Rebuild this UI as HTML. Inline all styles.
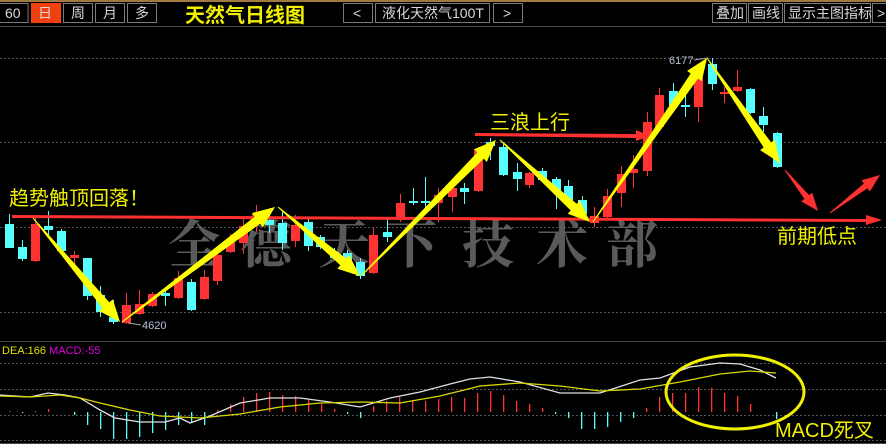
<!DOCTYPE html>
<html><head><meta charset="utf-8">
<style>
html,body{margin:0;padding:0;background:#000;width:886px;height:444px;overflow:hidden}
svg{display:block}
.b{fill:none;stroke:#7a7a7a;stroke-width:1}
.bt{font-family:"Liberation Sans","Noto Sans CJK SC",sans-serif;font-size:14px;fill:#d8d8d8}
.y{font-family:"Liberation Sans","Noto Sans CJK SC",sans-serif;fill:#f0f000}
.wm{font-family:"Noto Serif CJK SC","WenQuanYi Zen Hei",serif;font-size:52px;font-weight:bold;fill:#6a6a6a;opacity:.85}
</style></head><body>
<svg id="s" width="886" height="444" xmlns="http://www.w3.org/2000/svg">
<rect width="886" height="444" fill="#000"/>
<rect x="0" y="0" width="886" height="2" fill="#a07a40"/>
<line x1="0" y1="26.5" x2="886" y2="26.5" stroke="#4a4a4a"/>
<rect class="b" x="-1" y="3.5" width="29" height="19"/>
<text class="bt" x="5" y="18">60</text>
<rect x="31" y="3" width="30" height="20" fill="#f04010"/>
<text class="bt" x="38" y="18" fill="#f8d0c0">日</text>
<rect class="b" x="63.5" y="3.5" width="29" height="19"/><text class="bt" x="71" y="18">周</text>
<rect class="b" x="95.5" y="3.5" width="29" height="19"/><text class="bt" x="103" y="18">月</text>
<rect class="b" x="127.5" y="3.5" width="29" height="19"/><text class="bt" x="135" y="18">多</text>
<text class="y" x="185" y="22" font-size="20" font-weight="bold">天然气日线图</text>
<rect class="b" x="343.5" y="3.5" width="29" height="19"/><text class="bt" x="353" y="18">&lt;</text>
<rect class="b" x="375.5" y="3.5" width="114" height="19"/><text class="bt" x="382" y="18">液化天然气100T</text>
<rect class="b" x="493.5" y="3.5" width="29" height="19"/><text class="bt" x="503" y="18">&gt;</text>
<rect class="b" x="712.5" y="3.5" width="34" height="19"/><text class="bt" x="716" y="18">叠加</text>
<rect class="b" x="748.5" y="3.5" width="34" height="19"/><text class="bt" x="752" y="18">画线</text>
<rect class="b" x="784.5" y="3.5" width="86" height="19"/><text class="bt" x="788" y="18">显示主图指标</text>
<rect class="b" x="872.5" y="3.5" width="20" height="19"/><text class="bt" x="877" y="18">&gt;</text>
<g stroke="#555" stroke-dasharray="2,2" stroke-width="1">
<line x1="0" y1="58.5" x2="886" y2="58.5"/><line x1="0" y1="142.5" x2="886" y2="142.5"/>
<line x1="0" y1="227.5" x2="886" y2="227.5"/><line x1="0" y1="312.5" x2="886" y2="312.5"/>
<line x1="0" y1="363.5" x2="886" y2="363.5"/><line x1="0" y1="389.5" x2="886" y2="389.5"/>
<line x1="0" y1="415.5" x2="886" y2="415.5"/><line x1="0" y1="440.5" x2="886" y2="440.5"/>
</g>
<line x1="0" y1="341.5" x2="886" y2="341.5" stroke="#444"/>
<line x1="0" y1="443.5" x2="886" y2="443.5" stroke="#444"/>
<g class="wm">
<text x="168" y="263">全</text><text x="240" y="263">德</text><text x="318" y="263">天</text>
<text x="385" y="263">下</text><text x="462" y="263">技</text><text x="536" y="263">术</text><text x="606" y="263">部</text>
</g>
<g id="cand"></g>
<g id="hist"></g>
<polyline fill="none" stroke="#e0e0e0" stroke-width="1.3" points="0,395 30,397 48,393 65,395 80,398 100,410 115,418 140,422 165,422 180,418 190,423 210,416 240,403 270,398 300,398 330,402 360,407 390,398 420,392 450,384 470,379 490,377 520,382 560,393 600,393 640,380 660,378 690,367 720,363 740,364 760,370 776,378"/>
<polyline fill="none" stroke="#d8d800" stroke-width="1.3" points="0,396 30,397 60,395 80,398 100,403 130,410 160,416 200,418 240,414 280,407 320,403 360,402 400,403 440,396 480,386 520,383 560,386 600,391 640,389 680,382 720,374 750,371 776,373"/>
<polygon fill="#ff3030" points="12,215 866,219 866,215 882,220 866,225 866,222 12,218"/>
<polygon fill="#ff3030" points="475,133 636,134 636,130 650,136 636,141 636,138 475,136"/>
<g id="arr"></g>
<text x="142" y="329" font-family="Liberation Sans,sans-serif" font-size="11" fill="#b8c0d8">4620</text>
<line x1="128" y1="323" x2="141" y2="325" stroke="#aaa"/>
<text x="669" y="64" font-family="Liberation Sans,sans-serif" font-size="11" fill="#b8c0d8">6177</text>
<line x1="694" y1="60" x2="708" y2="58" stroke="#aaa"/>
<text class="y" x="9" y="205" font-size="20">趋势触顶回落！</text>
<text class="y" x="490" y="129" font-size="20">三浪上行</text>
<text class="y" x="777" y="243" font-size="20">前期低点</text>
<text class="y" x="775" y="437" font-size="20">MACD死叉</text>
<text x="2" y="354" font-family="Liberation Sans,sans-serif" font-size="11"><tspan fill="#e0e000">DEA:166 </tspan><tspan fill="#e000e0">MACD:-55</tspan></text>
<ellipse cx="735" cy="392" rx="69" ry="37" fill="none" stroke="#f0f000" stroke-width="3"/>
</svg>
<script>
var NS="http://www.w3.org/2000/svg";
function el(p,t,a){var e=document.createElementNS(NS,t);for(var k in a)e.setAttribute(k,a[k]);p.appendChild(e);return e;}
var R="#ff3333",C="#55ffff";
var cs=[[9,C,224,248,214,248],[22,C,247,259,240,261],[35,R,224,261,217,262],[48,C,226,230,211,235],[61,C,231,251,229,252],
[74,R,255,258,251,264],[87,C,258,296,258,300],[100,C,295,312,286,317],[113,C,317,322,300,324],[126,R,305,323,293,324],
[139,R,304,314,290,315],[152,R,294,306,292,307],[165,C,293,296,289,306],[178,R,278,298,271,299],[191,C,282,310,279,311],
[204,R,277,299,270,300],[217,R,255,281,250,285],[230,R,242,252,234,253],[243,R,226,243,218,254],[256,R,214,222,205,232],
[269,C,220,225,213,233],[282,C,223,243,211,250],[295,R,225,241,215,247],[308,C,222,246,219,251],[320,C,237,247,235,249],
[334,C,252,258,248,260],[347,C,253,267,250,270],[360,C,262,276,258,279],[373,R,235,273,228,274],[387,C,232,237,219,242],
[400,R,203,220,194,222],[413,C,201,203,188,205],[425,C,201,203,177,210],[438,R,195,203,188,222],[452,R,188,197,186,212],
[464,C,188,192,183,204],[478,R,149,191,147,192],[490,C,142,146,138,160],[503,C,147,175,143,176],[517,C,172,179,163,191],
[529,R,173,185,172,188],[542,C,171,180,168,181],[556,C,179,192,177,209],[568,C,186,201,180,202],[582,C,200,214,196,218],
[594,R,216,223,207,227],[607,R,196,217,189,219],[621,R,174,193,166,207],[633,R,169,173,155,188],[647,R,122,171,112,176],
[659,R,95,127,88,128],[673,C,91,107,83,110],[685,C,105,107,93,117],[698,R,68,107,65,122],[712,C,64,84,58,90],
[724,R,92,94,87,103],[737,R,87,91,70,92],[750,C,89,113,88,114],[763,C,116,125,107,132],[777,C,133,167,132,168]];
var g=document.getElementById("cand");
cs.forEach(function(c){el(g,"rect",{x:c[0],y:c[4],width:1,height:c[5]-c[4],fill:c[1]});
el(g,"rect",{x:c[0]-4,y:c[2],width:9,height:Math.max(2,c[3]-c[2]),fill:c[1]});});
var hs={9:-1,22:1,35:-1,48:-3,74:3,87:13,100:17,113:27,126:27,139:25,152:21,165:18,178:13,191:11,204:13,217:-2,230:-8,243:-15,256:-19,269:-20,282:-17,295:-16,308:-12,321:-8,334:-3,347:2,360:6,373:-6,386:-11,399:-15,412:-12,425:-11,438:-13,451:-15,464:-14,477:-19,490:-21,503:-17,516:-11,529:-8,542:-4,555:2,568:6,581:17,594:17,607:15,620:10,633:6,646:-4,659:-15,672:-19,685:-19,698:-25,711:-24,724:-19,737:-16,750:-8,776:7};
var h=document.getElementById("hist");
for(var k in hs){var v=hs[k];el(h,"rect",{x:+k,y:v<0?412+v:412,width:1.3,height:Math.abs(v),fill:v<0?R:C});}
function arrow(x1,y1,x2,y2,w,hw,hl){var dx=x2-x1,dy=y2-y1,L=Math.hypot(dx,dy),ux=dx/L,uy=dy/L,nx=-uy,ny=ux;
var bx=x2-ux*hl,by=y2-uy*hl;var p=[[x1+nx*.5,y1+ny*.5],[bx+nx*w/2,by+ny*w/2],[bx+nx*hw/2,by+ny*hw/2],[x2,y2],[bx-nx*hw/2,by-ny*hw/2],[bx-nx*w/2,by-ny*w/2],[x1-nx*.5,y1-ny*.5]];
return p.map(function(q){return q[0].toFixed(1)+","+q[1].toFixed(1)}).join(" ");}
var a=document.getElementById("arr");
[[33,218,120,322],[122,322,275,207],[278,207,360,276],[362,275,496,140],[500,140,590,222],[593,222,707,58],[707,58,780,163]].forEach(function(q){
el(a,"polygon",{points:arrow(q[0],q[1],q[2],q[3],9,18,22),fill:"#ffff00"});});
el(a,"polygon",{points:arrow(785,170,818,211,6,14,18),fill:"#ff3030"});
el(a,"polygon",{points:arrow(830,213,880,175,6,14,18),fill:"#ff3030"});
</script>
</body></html>
